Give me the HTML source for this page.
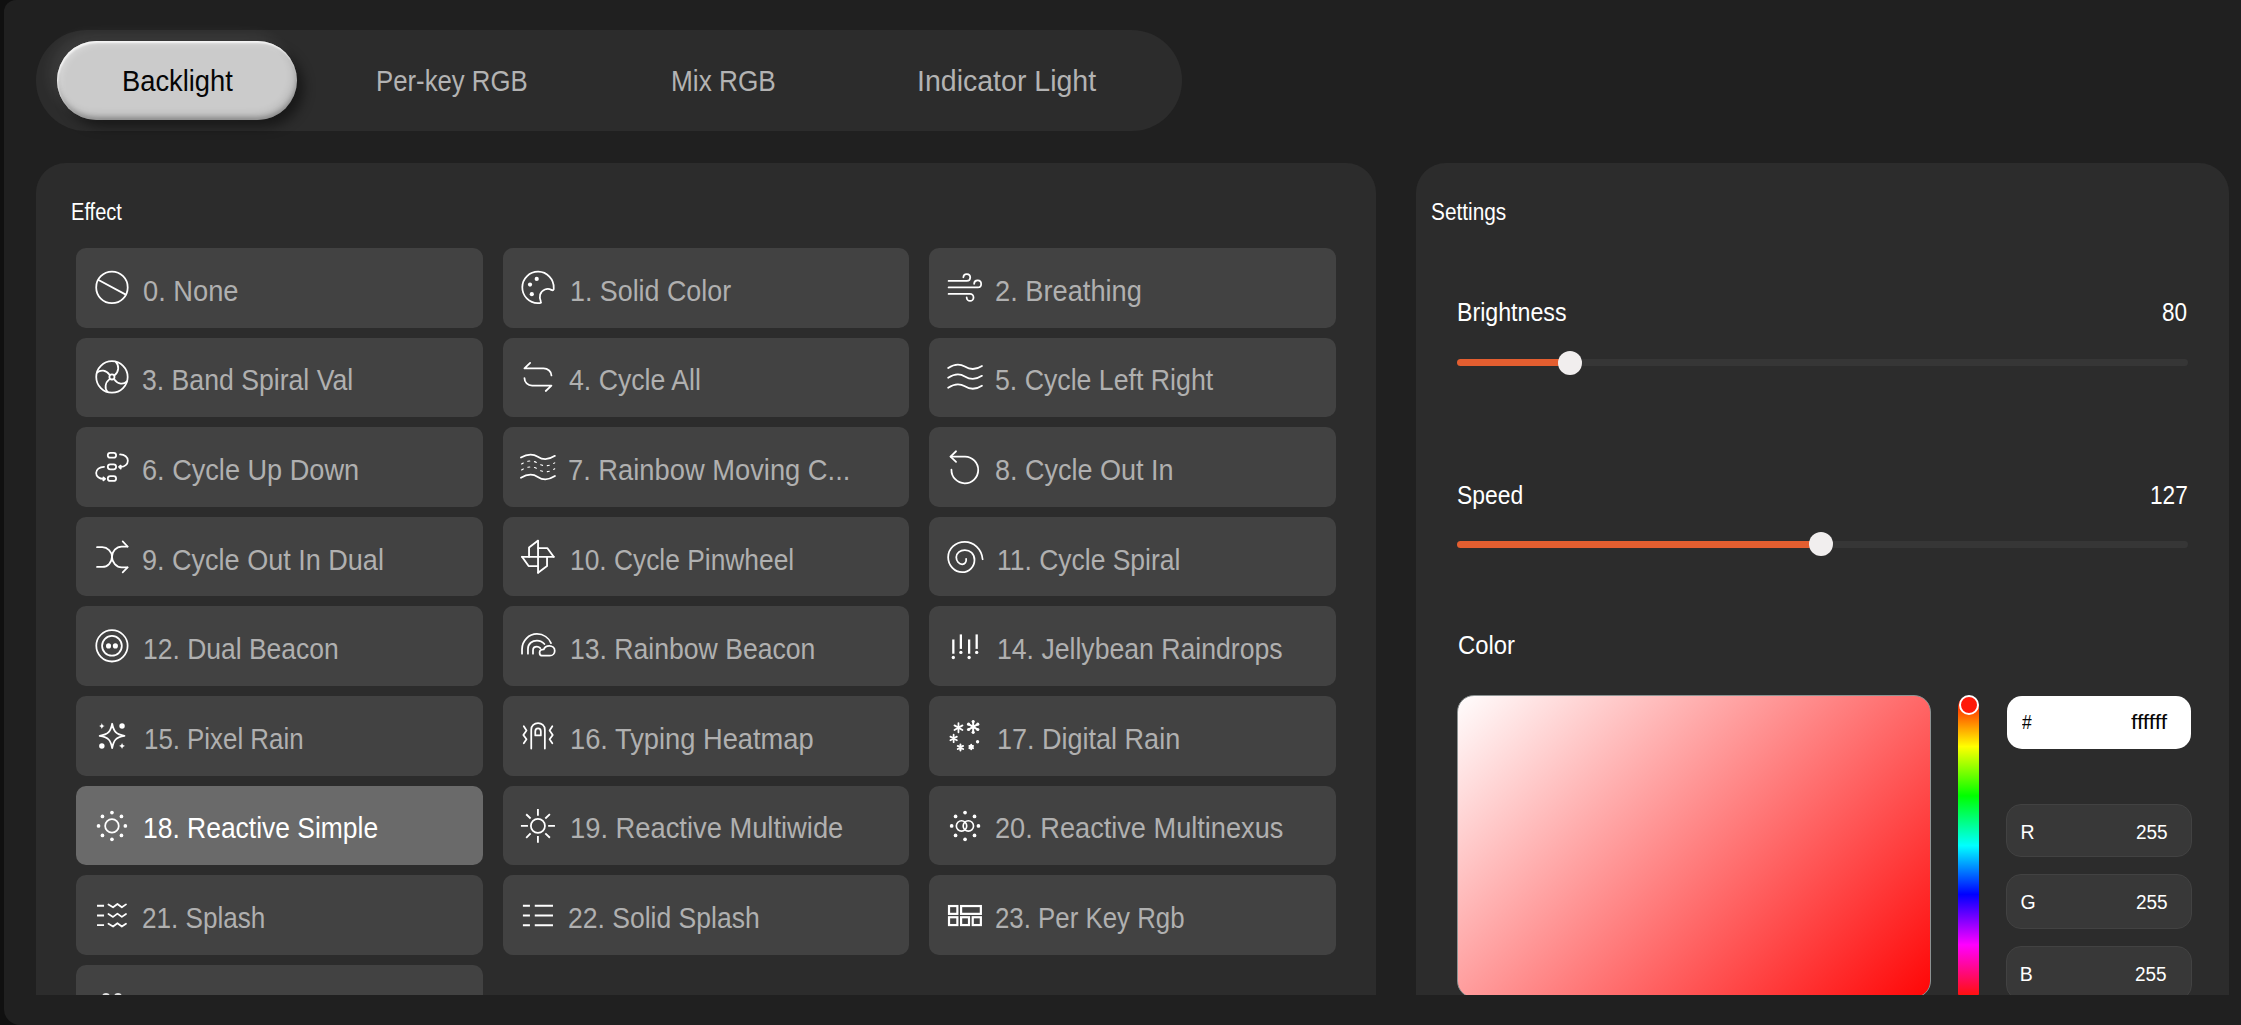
<!DOCTYPE html>
<html><head><meta charset="utf-8"><style>
html,body{margin:0;padding:0;width:2241px;height:1025px;overflow:hidden;background:#101010;font-family:"Liberation Sans", sans-serif}
.win{position:absolute;left:4px;top:0;width:2237px;height:1025px;background:#202020;border-radius:12px 0 0 16px}
</style></head><body>
<div class="win"></div><div style="position:absolute;left:36px;top:30px;width:1146px;height:101px;border-radius:50.5px;background:#2c2c2c"></div><div style="position:absolute;left:57px;top:41px;width:240px;height:79px;border-radius:39.5px;background:#cbcbcb;box-shadow:inset 1px 2px 2px rgba(255,255,255,0.8),inset 4px 4px 6px rgba(255,255,255,0.22),inset 0 -3px 4px rgba(0,0,0,0.22),inset -3px -5px 9px rgba(0,0,0,0.12),-7px -7px 14px rgba(255,255,255,0.075),7px 7px 12px rgba(0,0,0,0.45)"></div><div style="position:absolute;left:36px;top:163px;width:1340px;height:832px;border-radius:30px 30px 0 0;background:#2c2c2c;overflow:hidden"><div style="position:absolute;left:40.00px;top:85.00px;width:406.67px;height:79.6px;border-radius:10px;background:#424242"></div><div style="position:absolute;left:54px;top:102px;width:45px;height:45px"><svg width="45" height="45" viewBox="0 0 1025 1025" fill="none" stroke="#fff" stroke-width="40" stroke-linecap="round" stroke-linejoin="round"><circle cx="500" cy="510" r="359"/><path d="M195 340L815 675"/></svg></div><div style="position:absolute;left:466.67px;top:85.00px;width:406.67px;height:79.6px;border-radius:10px;background:#424242"></div><div style="position:absolute;left:479px;top:102px;width:45px;height:45px"><svg width="45" height="45" viewBox="0 0 1025 1025" fill="none" stroke="#fff" stroke-width="40" stroke-linecap="round" stroke-linejoin="round"><path d="M590 838C605 868 570 872 520 868A358 358 0 1 1 882 520C892 572 862 585 828 567C740 520 610 555 572 675C552 745 575 800 590 838Z"/><g fill="#fff" stroke="none"><circle cx="495" cy="318" r="48"/><circle cx="342" cy="447" r="48"/><circle cx="383" cy="665" r="48"/></g></svg></div><div style="position:absolute;left:893.34px;top:85.00px;width:406.67px;height:79.6px;border-radius:10px;background:#424242"></div><div style="position:absolute;left:906px;top:102px;width:45px;height:45px"><svg width="45" height="45" viewBox="0 0 1025 1025" fill="none" stroke="#fff" stroke-width="40" stroke-linecap="round" stroke-linejoin="round"><path d="M150 362H565A78 78 0 1 0 487 280"/><path d="M150 512H815A80 80 0 1 0 732 428"/><path d="M150 660H640A78 78 0 1 1 562 738"/></svg></div><div style="position:absolute;left:40.00px;top:174.60px;width:406.67px;height:79.6px;border-radius:10px;background:#424242"></div><div style="position:absolute;left:54px;top:192px;width:45px;height:45px"><svg width="45" height="45" viewBox="0 0 1025 1025" fill="none" stroke="#fff" stroke-width="40" stroke-linecap="round" stroke-linejoin="round"><circle cx="500" cy="500" r="358"/><circle cx="500" cy="500" r="58"/><path d="M560 460C660 380 670 240 590 160"/><path d="M445 450C370 340 240 330 160 400"/><path d="M440 555C340 630 330 770 400 840"/><path d="M555 560C630 670 770 680 840 600"/></svg></div><div style="position:absolute;left:466.67px;top:174.60px;width:406.67px;height:79.6px;border-radius:10px;background:#424242"></div><div style="position:absolute;left:479px;top:192px;width:45px;height:45px"><svg width="45" height="45" viewBox="0 0 1025 1025" fill="none" stroke="#fff" stroke-width="40" stroke-linecap="round" stroke-linejoin="round"><path d="M345 180L215 305H650C750 305 830 380 830 465"/><path d="M215 525C215 620 290 695 390 695H830L700 820"/></svg></div><div style="position:absolute;left:893.34px;top:174.60px;width:406.67px;height:79.6px;border-radius:10px;background:#424242"></div><div style="position:absolute;left:906px;top:192px;width:45px;height:45px"><svg width="45" height="45" viewBox="0 0 1025 1025" fill="none" stroke="#fff" stroke-width="40" stroke-linecap="round" stroke-linejoin="round"><path d="M140 295C240 228 380 178 520 263C640 338 760 348 910 250"/><path d="M140 520C240 453 380 403 520 488C640 563 760 573 910 475"/><path d="M140 745C240 678 380 628 520 713C640 788 760 798 910 700"/></svg></div><div style="position:absolute;left:40.00px;top:264.20px;width:406.67px;height:79.6px;border-radius:10px;background:#424242"></div><div style="position:absolute;left:54px;top:281px;width:45px;height:45px"><svg width="45" height="45" viewBox="0 0 1025 1025" fill="none" stroke="#fff" stroke-width="40" stroke-linecap="round" stroke-linejoin="round"><rect x="405" y="200" width="190" height="112" rx="56"/><rect x="405" y="465" width="190" height="112" rx="56"/><rect x="405" y="730" width="190" height="112" rx="56"/><path d="M685 238C790 238 862 300 862 380C862 460 790 520 700 520"/><path d="M700 490L660 520L700 560Z" fill="#fff"/><path d="M320 520C215 520 140 580 140 660C140 740 215 795 305 795"/><path d="M305 760L345 795L305 830Z" fill="#fff"/></svg></div><div style="position:absolute;left:466.67px;top:264.20px;width:406.67px;height:79.6px;border-radius:10px;background:#424242"></div><div style="position:absolute;left:479px;top:281px;width:45px;height:45px"><svg width="45" height="45" viewBox="0 0 1025 1025" fill="none" stroke="#fff" stroke-width="40" stroke-linecap="round" stroke-linejoin="round"><path d="M135 310C250 240 380 200 520 290C640 370 770 360 910 270"/><path d="M135 770C250 700 380 660 520 750C640 830 770 820 910 730"/><path d="M150 455C250 395 380 345 520 440C640 515 770 515 905 430" stroke-dasharray="45 110" stroke-width="26"/><path d="M150 590C250 530 380 480 520 575C640 650 770 650 905 565" stroke-dasharray="45 110" stroke-width="26"/></svg></div><div style="position:absolute;left:893.34px;top:264.20px;width:406.67px;height:79.6px;border-radius:10px;background:#424242"></div><div style="position:absolute;left:906px;top:281px;width:45px;height:45px"><svg width="45" height="45" viewBox="0 0 1025 1025" fill="none" stroke="#fff" stroke-width="40" stroke-linecap="round" stroke-linejoin="round"><path d="M215 585A305 305 0 1 0 525 285H195"/><path d="M320 165L195 285L320 405"/></svg></div><div style="position:absolute;left:40.00px;top:353.80px;width:406.67px;height:79.6px;border-radius:10px;background:#424242"></div><div style="position:absolute;left:54px;top:371px;width:45px;height:45px"><svg width="45" height="45" viewBox="0 0 1025 1025" fill="none" stroke="#fff" stroke-width="40" stroke-linecap="round" stroke-linejoin="round"><path d="M160 300H280C400 300 500 400 500 520C500 640 600 760 720 760H855"/><path d="M160 750H280C400 750 500 650 500 520C500 400 600 285 720 285H855"/><path d="M745 168L855 285"/><path d="M745 872L855 760"/></svg></div><div style="position:absolute;left:466.67px;top:353.80px;width:406.67px;height:79.6px;border-radius:10px;background:#424242"></div><div style="position:absolute;left:479px;top:371px;width:45px;height:45px"><svg width="45" height="45" viewBox="0 0 1025 1025" fill="none" stroke="#fff" stroke-width="42" stroke-linecap="round" stroke-linejoin="round"><path d="M525 150V885"/><path d="M160 520H885"/><path d="M520 155L320 305V520"/><path d="M525 320H735L880 520"/><path d="M160 520L310 730H520"/><path d="M730 520V730L525 880"/></svg></div><div style="position:absolute;left:893.34px;top:353.80px;width:406.67px;height:79.6px;border-radius:10px;background:#424242"></div><div style="position:absolute;left:906px;top:371px;width:45px;height:45px"><svg width="45" height="45" viewBox="0 0 1025 1025" fill="none" stroke="#fff" stroke-width="40" stroke-linecap="round" stroke-linejoin="round"><path d="M925 575C900 340 720 180 520 180C300 180 140 340 140 530C140 720 290 870 460 870C620 870 740 740 740 590C740 450 640 365 520 365C410 365 325 440 325 530C325 620 390 690 460 690C520 690 560 640 550 565"/></svg></div><div style="position:absolute;left:40.00px;top:443.40px;width:406.67px;height:79.6px;border-radius:10px;background:#424242"></div><div style="position:absolute;left:54px;top:460px;width:45px;height:45px"><svg width="45" height="45" viewBox="0 0 1025 1025" fill="none" stroke="#fff" stroke-width="40" stroke-linecap="round" stroke-linejoin="round"><circle cx="500" cy="520" r="357"/><circle cx="500" cy="520" r="225"/><g fill="#fff" stroke="none"><circle cx="422" cy="522" r="58"/><circle cx="578" cy="522" r="58"/></g></svg></div><div style="position:absolute;left:466.67px;top:443.40px;width:406.67px;height:79.6px;border-radius:10px;background:#424242"></div><div style="position:absolute;left:479px;top:460px;width:45px;height:45px"><svg width="45" height="45" viewBox="0 0 1025 1025" fill="none" stroke="#fff" stroke-width="40" stroke-linecap="round" stroke-linejoin="round"><path d="M160 700V600C160 400 320 250 500 250C650 250 770 340 820 460"/><path d="M295 700V590C295 470 390 400 500 400C570 400 630 430 670 480"/><path d="M410 700V620C410 570 450 540 500 540C530 540 555 555 575 575"/><path d="M625 745H790C860 745 905 690 905 630C905 565 850 520 780 520C715 520 670 560 655 600C600 600 560 630 560 675C560 715 590 745 625 745Z"/></svg></div><div style="position:absolute;left:893.34px;top:443.40px;width:406.67px;height:79.6px;border-radius:10px;background:#424242"></div><div style="position:absolute;left:906px;top:460px;width:45px;height:45px"><svg width="45" height="45" viewBox="0 0 1025 1025" fill="none" stroke="#fff" stroke-width="40" stroke-linecap="round" stroke-linejoin="round"><g stroke-width="52" stroke-linecap="butt"><path d="M258 375V700"/><path d="M430 260V590"/><path d="M618 375V700"/><path d="M790 260V590"/></g><g fill="#fff" stroke="none"><circle cx="258" cy="785" r="38"/><circle cx="430" cy="670" r="38"/><circle cx="618" cy="785" r="38"/><circle cx="790" cy="670" r="38"/></g></svg></div><div style="position:absolute;left:40.00px;top:533.00px;width:406.67px;height:79.6px;border-radius:10px;background:#424242"></div><div style="position:absolute;left:54px;top:550px;width:45px;height:45px"><svg width="45" height="45" viewBox="0 0 1025 1025" fill="none" stroke="#fff" stroke-width="40" stroke-linecap="round" stroke-linejoin="round"><path d="M505 245C540 420 590 490 785 520C590 550 540 620 505 800C470 620 420 550 220 520C420 490 470 420 505 245Z"/><g fill="#fff" stroke="none"><circle cx="730" cy="295" r="62"/><circle cx="270" cy="750" r="62"/><path d="M270 225C282 275 300 290 340 295C300 302 282 318 270 365C258 318 240 302 200 295C240 290 258 275 270 225Z"/><path d="M730 680C742 730 760 745 800 750C760 757 742 773 730 820C718 773 700 757 660 750C700 745 718 730 730 680Z"/></g></svg></div><div style="position:absolute;left:466.67px;top:533.00px;width:406.67px;height:79.6px;border-radius:10px;background:#424242"></div><div style="position:absolute;left:479px;top:550px;width:45px;height:45px"><svg width="45" height="45" viewBox="0 0 1025 1025" fill="none" stroke="#fff" stroke-width="40" stroke-linecap="round" stroke-linejoin="round"><path d="M370 810V380C370 290 440 230 525 230C610 230 680 290 680 380V810"/><path d="M462 510V420C462 380 490 352 525 352C560 352 588 380 588 420V510Z"/><path d="M200 300L262 400L190 500L262 600L200 690"/><path d="M850 300L788 400L860 500L788 600L850 690"/></svg></div><div style="position:absolute;left:893.34px;top:533.00px;width:406.67px;height:79.6px;border-radius:10px;background:#424242"></div><div style="position:absolute;left:906px;top:550px;width:45px;height:45px"><svg width="45" height="45" viewBox="0 0 1025 1025" fill="none" stroke="#fff" stroke-width="40" stroke-linecap="round" stroke-linejoin="round"><path d="M710 190L710 440M602 252L818 378M818 252L602 378" stroke-width="44"/><path d="M375 230L375 440M284 282L466 388M466 282L284 388" stroke-width="40"/><path d="M265 495L265 665M191 538L339 622M339 538L191 622" stroke-width="40"/><path d="M420 715L420 855M359 750L481 820M481 750L359 820" stroke-width="44"/><path d="M665 725L665 825M622 750L708 800M708 750L622 800" stroke-width="44"/><g fill="#fff" stroke="none"><circle cx="810" cy="655" r="38"/><circle cx="710" cy="195" r="36"/><circle cx="710" cy="440" r="36"/><circle cx="605" cy="255" r="36"/><circle cx="815" cy="255" r="36"/><circle cx="605" cy="375" r="36"/><circle cx="815" cy="375" r="36"/></g></svg></div><div style="position:absolute;left:40.00px;top:622.60px;width:406.67px;height:79.6px;border-radius:10px;background:#6a6a6a"></div><div style="position:absolute;left:54px;top:639px;width:45px;height:45px"><svg width="45" height="45" viewBox="0 0 1025 1025" fill="none" stroke="#fff" stroke-width="40" stroke-linecap="round" stroke-linejoin="round"><circle cx="500" cy="545" r="155" stroke-width="40"/><g fill="#fff" stroke="none"><circle cx="500" cy="240" r="42"/><circle cx="716" cy="329" r="42"/><circle cx="805" cy="545" r="42"/><circle cx="716" cy="761" r="42"/><circle cx="500" cy="850" r="42"/><circle cx="284" cy="761" r="42"/><circle cx="195" cy="545" r="42"/><circle cx="284" cy="329" r="42"/></g></svg></div><div style="position:absolute;left:466.67px;top:622.60px;width:406.67px;height:79.6px;border-radius:10px;background:#424242"></div><div style="position:absolute;left:479px;top:639px;width:45px;height:45px"><svg width="45" height="45" viewBox="0 0 1025 1025" fill="none" stroke="#fff" stroke-width="40" stroke-linecap="round" stroke-linejoin="round"><circle cx="522" cy="545" r="160" stroke-width="40"/><g stroke-width="42" stroke-linecap="butt"><path d="M522 160V315M522 775V930M755 545H910M135 545H295"/><path d="M690 375L795 275M355 375L255 280M690 715L795 815M355 715L255 815"/></g></svg></div><div style="position:absolute;left:893.34px;top:622.60px;width:406.67px;height:79.6px;border-radius:10px;background:#424242"></div><div style="position:absolute;left:906px;top:639px;width:45px;height:45px"><svg width="45" height="45" viewBox="0 0 1025 1025" fill="none" stroke="#fff" stroke-width="40" stroke-linecap="round" stroke-linejoin="round"><circle cx="445" cy="545" r="118" stroke-width="38"/><circle cx="600" cy="545" r="118" stroke-width="38"/><g fill="#fff" stroke="none"><circle cx="525" cy="240" r="42"/><circle cx="741" cy="329" r="42"/><circle cx="830" cy="545" r="42"/><circle cx="741" cy="761" r="42"/><circle cx="525" cy="850" r="42"/><circle cx="309" cy="761" r="42"/><circle cx="220" cy="545" r="42"/><circle cx="309" cy="329" r="42"/></g></svg></div><div style="position:absolute;left:40.00px;top:712.20px;width:406.67px;height:79.6px;border-radius:10px;background:#424242"></div><div style="position:absolute;left:54px;top:729px;width:45px;height:45px"><svg width="45" height="45" viewBox="0 0 1025 1025" fill="none" stroke="#fff" stroke-width="40" stroke-linecap="round" stroke-linejoin="round"><g stroke-width="44" stroke-linecap="butt"><path d="M160 315H320M160 535H320M160 755H320"/></g><g stroke-width="40"><path d="M420 282L525 347L625 272L725 347L820 282"/><path d="M420 502L525 567L625 492L725 567L820 502"/><path d="M420 722L525 787L625 712L725 787L820 722"/></g></svg></div><div style="position:absolute;left:466.67px;top:712.20px;width:406.67px;height:79.6px;border-radius:10px;background:#424242"></div><div style="position:absolute;left:479px;top:729px;width:45px;height:45px"><svg width="45" height="45" viewBox="0 0 1025 1025" fill="none" stroke="#fff" stroke-width="40" stroke-linecap="round" stroke-linejoin="round"><g stroke-width="46" stroke-linecap="butt"><path d="M180 315H340M180 535H340M180 755H340M450 315H865M450 535H865M450 755H865"/></g></svg></div><div style="position:absolute;left:893.34px;top:712.20px;width:406.67px;height:79.6px;border-radius:10px;background:#424242"></div><div style="position:absolute;left:906px;top:729px;width:45px;height:45px"><svg width="45" height="45" viewBox="0 0 1025 1025" fill="none" stroke="#fff" stroke-width="50" stroke-linecap="round" stroke-linejoin="round"><g stroke-width="50" stroke-linejoin="miter"><rect x="160" y="320" width="190" height="178"/><rect x="435" y="320" width="450" height="178"/><rect x="160" y="575" width="190" height="178"/><rect x="435" y="575" width="180" height="178"/><rect x="700" y="575" width="185" height="178"/></g></svg></div><div style="position:absolute;left:40.00px;top:801.80px;width:406.67px;height:79.6px;border-radius:10px;background:#424242"></div><div style="position:absolute;left:66px;top:830px;width:8px;height:4px;border-radius:4px 4px 0 0;background:#fff;opacity:.85"></div><div style="position:absolute;left:78px;top:830px;width:8px;height:4px;border-radius:4px 4px 0 0;background:#fff;opacity:.85"></div></div><div style="position:absolute;left:1416px;top:163px;width:813px;height:832px;border-radius:30px 30px 0 0;background:#2c2c2c;overflow:hidden"></div><div style="position:absolute;left:1457px;top:359.0px;width:731px;height:7px;border-radius:3.5px;background:#363636"></div><div style="position:absolute;left:1457px;top:359.0px;width:113.0px;height:7px;border-radius:3.5px 0 0 3.5px;background:#e35e30"></div><div style="position:absolute;left:1558.0px;top:350.5px;width:24px;height:24px;border-radius:12px;background:#f1eeee"></div><div style="position:absolute;left:1457px;top:540.5px;width:731px;height:7px;border-radius:3.5px;background:#363636"></div><div style="position:absolute;left:1457px;top:540.5px;width:364.0px;height:7px;border-radius:3.5px 0 0 3.5px;background:#e35e30"></div><div style="position:absolute;left:1809.0px;top:532.0px;width:24px;height:24px;border-radius:12px;background:#f1eeee"></div><div style="position:absolute;left:1457px;top:695px;width:474px;height:303px;box-sizing:border-box;border-radius:17px;border:1px solid #8c9292;background:linear-gradient(135deg,#fffdfd 0%,#ff0606 100%)"></div><div style="position:absolute;left:1958px;top:696px;width:21px;height:308px;border-radius:10.5px;background:linear-gradient(to bottom,#ff0000 0%,#ffff00 16.4%,#00ff00 32.4%,#00ffff 48.6%,#0000ff 64.4%,#ff00ff 80.8%,#ff1010 97%,#ff2010 100%)"></div><div style="position:absolute;left:1958.5px;top:695px;width:20px;height:20px;box-sizing:border-box;border-radius:10px;border:2px solid #fff;background:#ff1a0a"></div><div style="position:absolute;left:2007px;top:696px;width:184px;height:52.5px;border-radius:15px;background:#ffffff"></div><div style="position:absolute;left:2006px;top:804px;width:186px;height:53px;box-sizing:border-box;border-radius:15px;background:#383838;border:1px solid #424242"></div><div style="position:absolute;left:2006px;top:874px;width:186px;height:54.5px;box-sizing:border-box;border-radius:15px;background:#383838;border:1px solid #424242"></div><div style="position:absolute;left:2006px;top:946px;width:186px;height:54px;box-sizing:border-box;border-radius:15px;background:#383838;border:1px solid #424242"></div><div style="position:absolute;left:30px;top:995px;width:2205px;height:30px;background:#202020"></div>
<div style="position:absolute;left:121.86px;top:66.85px;font-size:29px;line-height:29px;color:#050505;white-space:nowrap;transform:scaleX(0.9419);transform-origin:0 0">Backlight</div><div style="position:absolute;left:376.41px;top:66.85px;font-size:29px;line-height:29px;color:#b3b3b3;white-space:nowrap;transform:scaleX(0.8876);transform-origin:0 0">Per-key RGB</div><div style="position:absolute;left:671.10px;top:66.85px;font-size:29px;line-height:29px;color:#b3b3b3;white-space:nowrap;transform:scaleX(0.9035);transform-origin:0 0">Mix RGB</div><div style="position:absolute;left:917.03px;top:66.85px;font-size:29px;line-height:29px;color:#b3b3b3;white-space:nowrap;transform:scaleX(0.9834);transform-origin:0 0">Indicator Light</div><div style="position:absolute;left:71.43px;top:201.45px;font-size:23px;line-height:23px;color:#ffffff;white-space:nowrap;transform:scaleX(0.8724);transform-origin:0 0">Effect</div><div style="position:absolute;left:1430.70px;top:201.15px;font-size:23px;line-height:23px;color:#ffffff;white-space:nowrap;transform:scaleX(0.9049);transform-origin:0 0">Settings</div><div style="position:absolute;left:1457.37px;top:300.45px;font-size:25px;line-height:25px;color:#ffffff;white-space:nowrap;transform:scaleX(0.9274);transform-origin:0 0">Brightness</div><div style="position:absolute;left:2162.20px;top:300.25px;font-size:25px;line-height:25px;color:#ffffff;white-space:nowrap;transform:scaleX(0.9000);transform-origin:0 0">80</div><div style="position:absolute;left:1456.88px;top:482.65px;font-size:25px;line-height:25px;color:#ffffff;white-space:nowrap;transform:scaleX(0.9155);transform-origin:0 0">Speed</div><div style="position:absolute;left:2149.79px;top:482.65px;font-size:25px;line-height:25px;color:#ffffff;white-space:nowrap;transform:scaleX(0.9075);transform-origin:0 0">127</div><div style="position:absolute;left:1457.60px;top:633.25px;font-size:25px;line-height:25px;color:#ffffff;white-space:nowrap;transform:scaleX(0.9533);transform-origin:0 0">Color</div><div style="position:absolute;left:2021.79px;top:712.92px;font-size:19.5px;line-height:19.5px;color:#050505;white-space:nowrap;transform:scaleX(0.8917);transform-origin:0 0">#</div><div style="position:absolute;left:2130.50px;top:712.92px;font-size:19.5px;line-height:19.5px;color:#050505;white-space:nowrap;transform:scaleX(1.1719);transform-origin:0 0">ffffff</div><div style="position:absolute;left:2020.50px;top:822.92px;font-size:19.5px;line-height:19.5px;color:#ffffff;white-space:nowrap;transform:scaleX(1.0000);transform-origin:0 0">R</div><div style="position:absolute;left:2135.50px;top:822.92px;font-size:19.5px;line-height:19.5px;color:#ffffff;white-space:nowrap;transform:scaleX(0.9727);transform-origin:0 0">255</div><div style="position:absolute;left:2020.50px;top:892.82px;font-size:19.5px;line-height:19.5px;color:#ffffff;white-space:nowrap;transform:scaleX(1.0000);transform-origin:0 0">G</div><div style="position:absolute;left:2136.40px;top:892.82px;font-size:19.5px;line-height:19.5px;color:#ffffff;white-space:nowrap;transform:scaleX(0.9727);transform-origin:0 0">255</div><div style="position:absolute;left:2019.80px;top:964.82px;font-size:19.5px;line-height:19.5px;color:#ffffff;white-space:nowrap;transform:scaleX(1.0000);transform-origin:0 0">B</div><div style="position:absolute;left:2134.90px;top:964.82px;font-size:19.5px;line-height:19.5px;color:#ffffff;white-space:nowrap;transform:scaleX(0.9727);transform-origin:0 0">255</div><div style="position:absolute;left:142.50px;top:276.85px;font-size:29px;line-height:29px;color:#b0b0b0;white-space:nowrap;transform:scaleX(0.9406);transform-origin:0 0">0. None</div><div style="position:absolute;left:570.14px;top:276.85px;font-size:29px;line-height:29px;color:#b0b0b0;white-space:nowrap;transform:scaleX(0.9253);transform-origin:0 0">1. Solid Color</div><div style="position:absolute;left:994.90px;top:276.85px;font-size:29px;line-height:29px;color:#b0b0b0;white-space:nowrap;transform:scaleX(0.9394);transform-origin:0 0">2. Breathing</div><div style="position:absolute;left:141.58px;top:366.45px;font-size:29px;line-height:29px;color:#b0b0b0;white-space:nowrap;transform:scaleX(0.9180);transform-origin:0 0">3. Band Spiral Val</div><div style="position:absolute;left:569.17px;top:366.45px;font-size:29px;line-height:29px;color:#b0b0b0;white-space:nowrap;transform:scaleX(0.9196);transform-origin:0 0">4. Cycle All</div><div style="position:absolute;left:994.92px;top:366.45px;font-size:29px;line-height:29px;color:#b0b0b0;white-space:nowrap;transform:scaleX(0.9207);transform-origin:0 0">5. Cycle Left Right</div><div style="position:absolute;left:141.56px;top:456.05px;font-size:29px;line-height:29px;color:#b0b0b0;white-space:nowrap;transform:scaleX(0.9352);transform-origin:0 0">6. Cycle Up Down</div><div style="position:absolute;left:568.23px;top:456.05px;font-size:29px;line-height:29px;color:#b0b0b0;white-space:nowrap;transform:scaleX(0.9418);transform-origin:0 0">7. Rainbow Moving C...</div><div style="position:absolute;left:994.91px;top:456.05px;font-size:29px;line-height:29px;color:#b0b0b0;white-space:nowrap;transform:scaleX(0.9311);transform-origin:0 0">8. Cycle Out In</div><div style="position:absolute;left:141.57px;top:545.65px;font-size:29px;line-height:29px;color:#b0b0b0;white-space:nowrap;transform:scaleX(0.9322);transform-origin:0 0">9. Cycle Out In Dual</div><div style="position:absolute;left:570.16px;top:545.65px;font-size:29px;line-height:29px;color:#b0b0b0;white-space:nowrap;transform:scaleX(0.9090);transform-origin:0 0">10. Cycle Pinwheel</div><div style="position:absolute;left:996.83px;top:545.65px;font-size:29px;line-height:29px;color:#b0b0b0;white-space:nowrap;transform:scaleX(0.9126);transform-origin:0 0">11. Cycle Spiral</div><div style="position:absolute;left:143.49px;top:635.25px;font-size:29px;line-height:29px;color:#b0b0b0;white-space:nowrap;transform:scaleX(0.9127);transform-origin:0 0">12. Dual Beacon</div><div style="position:absolute;left:570.15px;top:635.25px;font-size:29px;line-height:29px;color:#b0b0b0;white-space:nowrap;transform:scaleX(0.9169);transform-origin:0 0">13. Rainbow Beacon</div><div style="position:absolute;left:996.82px;top:635.25px;font-size:29px;line-height:29px;color:#b0b0b0;white-space:nowrap;transform:scaleX(0.9177);transform-origin:0 0">14. Jellybean Raindrops</div><div style="position:absolute;left:143.51px;top:724.85px;font-size:29px;line-height:29px;color:#b0b0b0;white-space:nowrap;transform:scaleX(0.8915);transform-origin:0 0">15. Pixel Rain</div><div style="position:absolute;left:570.13px;top:724.85px;font-size:29px;line-height:29px;color:#b0b0b0;white-space:nowrap;transform:scaleX(0.9407);transform-origin:0 0">16. Typing Heatmap</div><div style="position:absolute;left:996.81px;top:724.85px;font-size:29px;line-height:29px;color:#b0b0b0;white-space:nowrap;transform:scaleX(0.9313);transform-origin:0 0">17. Digital Rain</div><div style="position:absolute;left:143.49px;top:814.45px;font-size:29px;line-height:29px;color:#ffffff;white-space:nowrap;transform:scaleX(0.9117);transform-origin:0 0">18. Reactive Simple</div><div style="position:absolute;left:570.13px;top:814.45px;font-size:29px;line-height:29px;color:#b0b0b0;white-space:nowrap;transform:scaleX(0.9419);transform-origin:0 0">19. Reactive Multiwide</div><div style="position:absolute;left:994.90px;top:814.45px;font-size:29px;line-height:29px;color:#b0b0b0;white-space:nowrap;transform:scaleX(0.9366);transform-origin:0 0">20. Reactive Multinexus</div><div style="position:absolute;left:141.60px;top:904.05px;font-size:29px;line-height:29px;color:#b0b0b0;white-space:nowrap;transform:scaleX(0.9000);transform-origin:0 0">21. Splash</div><div style="position:absolute;left:568.26px;top:904.05px;font-size:29px;line-height:29px;color:#b0b0b0;white-space:nowrap;transform:scaleX(0.9149);transform-origin:0 0">22. Solid Splash</div><div style="position:absolute;left:994.95px;top:904.05px;font-size:29px;line-height:29px;color:#b0b0b0;white-space:nowrap;transform:scaleX(0.8906);transform-origin:0 0">23. Per Key Rgb</div>
</body></html>
